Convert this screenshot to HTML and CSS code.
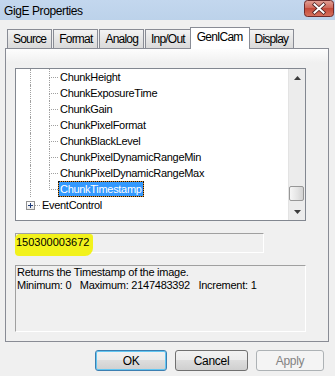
FILE: index.html
```html
<!DOCTYPE html>
<html lang="en">
<head>
  <meta charset="UTF-8">
  <meta name="viewport" content="width=device-width, initial-scale=1.0">
  <title>GigE Properties</title>
  <link rel="stylesheet" href="styles.css">
</head>
<body>
  <div class="titlebar">
    <span class="title">GigE Properties</span>
    <button class="close" title="Close">
      <svg width="30" height="17" viewBox="0 0 30 17">
        <defs>
          <linearGradient id="closeBg" x1="0" y1="0" x2="0" y2="1">
            <stop offset="0" stop-color="#e2a196"/>
            <stop offset="0.45" stop-color="#cf6a5c"/>
            <stop offset="0.5" stop-color="#c44a3a"/>
            <stop offset="1" stop-color="#d7735f"/>
          </linearGradient>
        </defs>
        <rect x="0.5" y="0.5" width="29" height="16" rx="3" fill="url(#closeBg)" stroke="#6e2b2b"/>
        <path d="M10.5 4.5 L19.5 12.5 M19.5 4.5 L10.5 12.5" stroke="#4a2020" stroke-width="3.6" stroke-linecap="square"/>
        <path d="M10.5 4.5 L19.5 12.5 M19.5 4.5 L10.5 12.5" stroke="#fff" stroke-width="2" stroke-linecap="square"/>
      </svg>
    </button>
  </div>

  <div class="tabs">
    <div class="tab">Source</div>
    <div class="tab">Format</div>
    <div class="tab">Analog</div>
    <div class="tab">Inp/Out</div>
    <div class="tab active">GenICam</div>
    <div class="tab">Display</div>
  </div>

  <div class="panel">
    <div class="tree">
      <div class="tree-items">
        <div class="node">
          <span class="indent"></span><span class="guide"></span>
          <span class="elbow"><span></span><span></span></span>
          <span class="label">ChunkHeight</span>
        </div>
        <div class="node">
          <span class="indent"></span><span class="guide"></span>
          <span class="elbow"><span></span><span></span></span>
          <span class="label">ChunkExposureTime</span>
        </div>
        <div class="node">
          <span class="indent"></span><span class="guide"></span>
          <span class="elbow"><span></span><span></span></span>
          <span class="label">ChunkGain</span>
        </div>
        <div class="node">
          <span class="indent"></span><span class="guide"></span>
          <span class="elbow"><span></span><span></span></span>
          <span class="label">ChunkPixelFormat</span>
        </div>
        <div class="node">
          <span class="indent"></span><span class="guide"></span>
          <span class="elbow"><span></span><span></span></span>
          <span class="label">ChunkBlackLevel</span>
        </div>
        <div class="node">
          <span class="indent"></span><span class="guide"></span>
          <span class="elbow"><span></span><span></span></span>
          <span class="label">ChunkPixelDynamicRangeMin</span>
        </div>
        <div class="node">
          <span class="indent"></span><span class="guide"></span>
          <span class="elbow"><span></span><span></span></span>
          <span class="label">ChunkPixelDynamicRangeMax</span>
        </div>
        <div class="node last">
          <span class="indent"></span><span class="guide"></span>
          <span class="elbow"><span></span><span></span></span>
          <span class="label selected">ChunkTimestamp</span>
        </div>
        <div class="node">
          <span class="indent short"></span>
          <span class="expander">
            <svg width="9" height="9" viewBox="0 0 9 9">
              <path d="M2 4.5 H7 M4.5 2 V7" stroke="#1f3d7a" stroke-width="1"/>
            </svg>
          </span>
          <span class="stub"></span>
          <span class="label">EventControl</span>
        </div>
      </div>
      <div class="scrollbar">
        <div class="arrow">
          <svg width="7" height="4" viewBox="0 0 7 4"><path d="M0 4 L3.5 0 L7 4 Z" fill="#3c3c3c"/></svg>
        </div>
        <div class="track"><div class="thumb"></div></div>
        <div class="arrow">
          <svg width="7" height="4" viewBox="0 0 7 4"><path d="M0 0 L7 0 L3.5 4 Z" fill="#3c3c3c"/></svg>
        </div>
      </div>
    </div>

    <div class="value"><span class="marker">150300003672</span></div>

    <div class="description">
      <div class="line">Returns the Timestamp of the image.</div>
      <div class="line">Minimum: 0   Maximum: 2147483392   Increment: 1</div>
    </div>
  </div>

  <div class="buttons">
    <button class="btn default">OK</button>
    <button class="btn">Cancel</button>
    <button class="btn apply" disabled>Apply</button>
  </div>
</body>
</html>
```

FILE: styles.css
```css
* {
  box-sizing: border-box;
}

body {
  margin: 0;
  width: 335px;
  height: 376px;
  overflow: hidden;
  background: #f0f0f0;
  font-family: "Liberation Sans", Arial, sans-serif;
  font-size: 11px;
  color: #000;
}

/* title bar */
.titlebar {
  height: 20px;
  display: flex;
  justify-content: space-between;
  align-items: flex-start;
  background: linear-gradient(#c3d7ee, #bcd2ea);
}

.title {
  font-size: 12px;
  letter-spacing: -0.4px;
  line-height: 14px;
  padding: 4px 0 0 4px;
}

.close {
  width: 30px;
  height: 17px;
  margin: 0 1px 0 0;
  padding: 0;
  border: 0;
  background: none;
}

.close svg {
  display: block;
}

/* tabs */
.tabs {
  display: flex;
  align-items: flex-start;
  height: 22px;
  margin-top: 7px;
  padding-left: 7px;
  position: relative;
  z-index: 1;
}

.tab {
  height: 19px;
  margin-top: 2px;
  margin-right: 1px;
  padding: 2px 5px 0;
  border: 1px solid #898c95;
  border-bottom: 0;
  background: linear-gradient(#f3f3f3, #e6e6e6 50%, #dadada);
  font-size: 12px;
  letter-spacing: -0.8px;
  line-height: 15px;
}

.tab.active {
  height: 22px;
  margin: 0 -1px 0 -2px;
  padding: 2px 6px 0;
  background: #fff;
}

/* tab page */
.panel {
  height: 294px;
  margin: -1px 6px 0 5px;
  padding: 19px 0 0 9px;
  border: 1px solid #898c95;
  background: linear-gradient(#fdfdfd, #f0f0f0 14px);
}

.tree {
  display: flex;
  width: 291px;
  height: 153px;
  border: 1px solid #828790;
  background: #fff;
}

.tree-items {
  flex: 1;
  overflow: hidden;
}

.node {
  display: flex;
  height: 16px;
  align-items: flex-start;
}

.indent {
  width: 14px;
  height: 16px;
}

.indent.short {
  width: 10px;
}

.guide {
  width: 19px;
  height: 16px;
  border-left: 1px dotted #a0a0a0;
}

.elbow {
  display: flex;
  flex-direction: column;
  width: 9px;
}

.elbow span {
  height: 8px;
  border-left: 1px dotted #a0a0a0;
}

.elbow span:first-child {
  height: 9px;
  border-bottom: 1px dotted #a0a0a0;
}

.elbow span:last-child {
  height: 7px;
}

.node.last .elbow span:last-child {
  border-left: 0;
}

.expander {
  width: 9px;
  height: 9px;
  margin-top: 4px;
  border: 1px solid #919191;
  background: linear-gradient(#fff, #e9e9e9);
}

.expander svg {
  display: block;
  margin: -1px;
}

.stub {
  width: 5px;
  height: 9px;
  border-bottom: 1px dotted #a0a0a0;
}

.label {
  height: 16px;
  padding: 0 1px;
  border: 1px solid transparent;
  line-height: 14px;
  letter-spacing: -0.3px;
  white-space: nowrap;
}

.label.selected {
  color: #fff;
  border: 1px dotted #111;
  background: linear-gradient(#3399ff, #3399ff) padding-box, #e0902a;
}

/* scroll bar */
.scrollbar {
  display: flex;
  flex-direction: column;
  width: 17px;
  background: #ececec;
  border-left: 1px solid #e3e3e3;
}

.arrow {
  height: 17px;
  display: flex;
  align-items: center;
  justify-content: center;
}

.arrow svg {
  display: block;
}

.track {
  flex: 1;
}

.thumb {
  width: 15px;
  height: 15px;
  margin: 100px 0 0 0;
  border: 1px solid #979797;
  border-radius: 2px;
  background: linear-gradient(90deg, #f6f6f6, #e3e3e3 60%, #d2d2d2);
}

/* value field */
.value {
  width: 249px;
  height: 20px;
  margin-top: 12px;
  border: 1px solid;
  border-color: #a0a0a0 #fff #fff #a0a0a0;
}

.marker {
  display: inline-block;
  margin-left: -1px;
  padding: 2px 4px 7px 1px;
  line-height: 13px;
  background: #f2f21c;
  border-radius: 5px 3px 8px 4px;
}

/* description */
.description {
  width: 291px;
  height: 67px;
  margin-top: 12px;
  padding: 0 1px;
  border: 1px solid;
  border-color: #a0a0a0 #fff #fff #a0a0a0;
  line-height: 13px;
  letter-spacing: -0.25px;
}

.line {
  white-space: pre;
}

/* buttons */
.buttons {
  display: flex;
  justify-content: flex-end;
  gap: 8px;
  margin-top: 8px;
  padding-right: 11px;
}

.btn {
  width: 73px;
  height: 21px;
  padding: 0;
  border: 1px solid #707070;
  border-radius: 3px;
  background: linear-gradient(#f2f2f2, #ebebeb 50%, #dddddd 50%, #cfcfcf);
  font-family: "Liberation Sans", Arial, sans-serif;
  font-size: 12px;
  letter-spacing: -0.3px;
  color: #000;
}

.btn.default {
  width: 72px;
  border-color: #3c7fb1;
  box-shadow: inset 0 0 0 1px #62c6f2;
}

.btn.apply {
  width: 68px;
}

.btn:disabled {
  border-color: #adb2b5;
  background: #f4f4f4;
  color: #838383;
}
```
